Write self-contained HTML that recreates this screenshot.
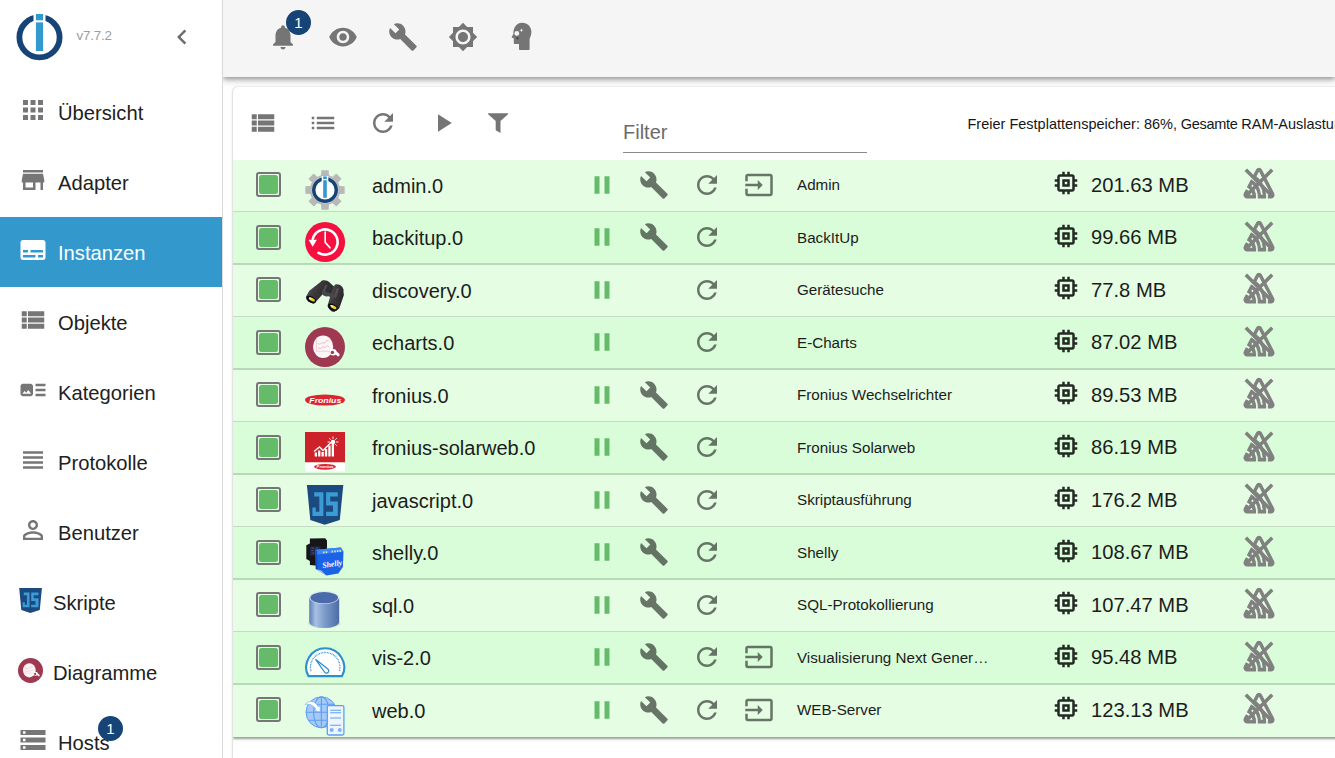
<!DOCTYPE html>
<html lang="de">
<head>
<meta charset="utf-8">
<title>instances - ioBroker</title>
<style>
*{box-sizing:border-box;margin:0;padding:0}
html,body{width:1335px;height:758px;overflow:hidden;background:#fff;font-family:"Liberation Sans",sans-serif;color:#1f1f1f}
svg{display:block;overflow:visible}
#side{z-index:3;position:absolute;left:0;top:0;width:223px;height:758px;background:#fff;border-right:1px solid #d9d9d9;overflow:hidden}
#logo{position:absolute;left:16px;top:14px;width:47px;height:47px}
#ver{position:absolute;left:76.500px;top:28px;font-size:13.400px;line-height:16px;color:#9e9e9e;letter-spacing:-.2px}
#chev{position:absolute;left:167px;top:22px;width:30px;height:30px;fill:#6e6e6e}
.nav{position:absolute;left:0;width:222px;height:70px}
.nav.sel{background:#3399cc}
.nav .ic{position:absolute;left:18px;top:18px;width:30px;height:30px;fill:#767676}
.nav.sel .ic{fill:#fff}
.nav .tx{position:absolute;left:58px;top:24px;font-size:20.200px;line-height:24px;white-space:nowrap;color:#212121}
.nav.sel .tx{color:#fff}
.badge{position:absolute;width:25px;height:25px;border-radius:50%;background:#164477;color:#fff;font-size:15px;line-height:25px;text-align:center}
#head{position:absolute;left:223px;top:0;width:1112px;height:77px;background:#f5f5f5;box-shadow:0 2px 5px rgba(0,0,0,.36),0 5px 8px rgba(0,0,0,.10)}
#head svg.hi{position:absolute;top:22px;width:30px;height:30px;fill:#757575}
#paper{position:absolute;left:233px;top:87px;width:1120px;height:700px;background:#fff;border-radius:5px 0 0 0;box-shadow:0 0 2px rgba(0,0,0,.15),-1px 0 2px rgba(0,0,0,.10)}
#paper svg.ti{position:absolute;top:21px;width:30px;height:30px;fill:#757575}
#filter{position:absolute;left:390px;top:33px;width:244px;height:33px;border-bottom:1px solid #8a8a8a;font-size:20px;line-height:24px;color:#6b6b6b}
#stat{position:absolute;left:734.500px;top:28px;font-size:14.500px;line-height:18px;white-space:nowrap;color:#161616}
#rows{position:absolute;left:0;top:73px;width:1120px;clip-path:inset(0 0 -12px 0);box-shadow:0 2px 2px rgba(0,0,0,.30),0 1px 4px rgba(0,0,0,.18)}
.row{position:relative;height:52px;border-bottom:1px solid #c3dcc3;background:#e4fde3}
.row.alt{height:53px;border-bottom:2px solid #b9d8b9;background:#d9fdd9}
.cb{position:absolute;left:23px;top:12px;width:25px;height:25px;border:2px solid #777577;border-radius:3px}
.cb i{position:absolute;left:1px;top:1px;width:19px;height:19px;background:#66bb6a;border-radius:2.500px}
.row.alt .cb{top:13px}
.row.last{border-bottom:0}
.row.alt .tt{top:17px}
.row.alt .mi{top:9px}
.row.alt .se{top:9px}
.ai{position:absolute;left:72px;top:10px;width:40px;height:40px}
.nm{position:absolute;left:139px;top:14px;font-size:20px;line-height:24px;white-space:nowrap;color:#1c1c1c}
.ri{position:absolute;top:10px;width:30px;height:30px;fill:rgba(0,0,0,.54)}
.ri.pa{left:354px;fill:#66bb6a}
.ri.wr{left:406px}
.ri.rf{left:459px}
.ri.in{left:511px}
.tt{position:absolute;left:564px;top:16px;font-size:15.200px;line-height:18px;white-space:nowrap;color:#1c1c1c}
.mi{position:absolute;left:818px;top:8px;width:30px;height:30px;fill:rgba(0,0,0,.84)}
.mt{position:absolute;left:858px;top:13px;font-size:20.200px;line-height:24px;white-space:nowrap;color:#1c1c1c}
.se{position:absolute;left:1011px;top:8px;width:30px;height:30px}
</style>
</head>
<body>
<div id="side">
<svg id="logo" viewBox="0 0 47 47"><circle cx="23.500" cy="23.300" r="20.100" fill="none" stroke="#164477" stroke-width="5.800"/><rect x="17.500" y="-1" width="12" height="9.500" fill="#fff"/><rect x="19.900" y="0" width="7.200" height="6.300" fill="#3399cc"/><rect x="19.900" y="8.400" width="7.200" height="28.600" fill="#3399cc"/></svg>
<div id="ver">v7.7.2</div>
<svg id="chev" style="" viewBox="0 0 24 24" ><path d="M15.41 7.41L14 6l-6 6 6 6 1.41-1.41L10.83 12z"/></svg>
<div class="nav" style="top:77px"><svg class="ic" style="" viewBox="0 0 24 24" ><path d="M4 8h4V4H4v4zm6 12h4v-4h-4v4zm-6 0h4v-4H4v4zm0-6h4v-4H4v4zm6 0h4v-4h-4v4zm6-10v4h4V4h-4zm-6 4h4V4h-4v4zm6 6h4v-4h-4v4zm0 6h4v-4h-4v4z"/></svg><div class="tx">Übersicht</div></div>
<div class="nav" style="top:147px"><svg class="ic" style="" viewBox="0 0 24 24" ><path d="M20 4H4v2h16V4zm1 10v-2l-1-5H4l-1 5v2h1v6h10v-6h4v6h2v-6h1zm-9 4H6v-4h6v4z"/></svg><div class="tx">Adapter</div></div>
<div class="nav sel" style="top:217px"><svg class="ic" style="" viewBox="0 0 24 24" ><path d="M20 4H4c-1.1 0-2 .9-2 2v12c0 1.1.9 2 2 2h16c1.1 0 2-.9 2-2V6c0-1.1-.9-2-2-2zM4 12h4v2H4v-2zm10 6H4v-2h10v2zm6 0h-4v-2h4v2zm0-4H10v-2h10v2z"/></svg><div class="tx">Instanzen</div></div>
<div class="nav" style="top:287px"><svg class="ic" style="" viewBox="0 0 24 24" ><path d="M3 14h4v-4H3v4zm0 5h4v-4H3v4zM3 9h4V5H3v4zm5 5h13v-4H8v4zm0 5h13v-4H8v4zM8 5v4h13V5H8z"/></svg><div class="tx">Objekte</div></div>
<div class="nav" style="top:357px"><svg class="ic" style="" viewBox="0 0 24 24" ><path d="M22 13h-8v-2h8v2zm0-6h-8v2h8V7zm-8 10h8v-2h-8v2zm-2-8v6c0 1.1-.9 2-2 2H4c-1.1 0-2-.9-2-2V9c0-1.1.9-2 2-2h6c1.1 0 2 .9 2 2zm-1.5 6l-2.25-3-1.75 2.26-1.25-1.51L3.5 15h7z"/></svg><div class="tx">Kategorien</div></div>
<div class="nav" style="top:427px"><svg class="ic" style="" viewBox="0 0 24 24" ><path d="M4 15h16v-2H4v2zm0 4h16v-2H4v2zm0-8h16V9H4v2zm0-6v2h16V5H4z"/></svg><div class="tx">Protokolle</div></div>
<div class="nav" style="top:497px"><svg class="ic" style="" viewBox="0 0 24 24" ><path d="M12 5.9c1.16 0 2.1.94 2.1 2.1s-.94 2.1-2.1 2.1S9.9 9.16 9.9 8s.94-2.1 2.1-2.1m0 9c2.97 0 6.1 1.46 6.1 2.1v1.1H5.9V17c0-.64 3.13-2.1 6.1-2.1M12 4C9.79 4 8 5.79 8 8s1.79 4 4 4 4-1.79 4-4-1.79-4-4-4zm0 9c-2.67 0-8 1.34-8 4v3h16v-3c0-2.66-5.33-4-8-4z"/></svg><div class="tx">Benutzer</div></div>
<div class="nav" style="top:567px"><svg style="position:absolute;left:18px;top:21px;width:25px;height:25px" viewBox="0 -5.100 40 40"><path d="M1.900 -5.100h36.400l-3.500 35-15.100 4.800-14.400-4.800z" fill="#1b4a80"/>
<g fill="#3a9bd5"><path d="M9.200 2.200h9.200v23.600h-11v-8.300h3.400v4.200h3.500v-15.400h-5.100z"/><path d="M21.100 2.200h11.700v4.100h-7.600v5.100h7.600v14.400h-11.700v-4.100h6.900v-6.200h-6.900z"/></g></svg><div class="tx" style="left:53px">Skripte</div></div>
<div class="nav" style="top:637px"><svg style="position:absolute;left:18px;top:21px;width:25px;height:25px" viewBox="0 0 40 40"><circle cx="20" cy="20" r="20" fill="#9f3851"/><ellipse cx="18.100" cy="19.700" rx="10.100" ry="11.300" fill="#fdf6f7"/>
<path d="M11.400 12.500v11.700h14.600" fill="none" stroke="#ecc9d3" stroke-width=".9"/>
<path d="M12.800 16.300l2 1 2.600-1.700 2.300 .700 2.300-3.300 1.700 1.300M12.800 20.900l2.600 .600 2.400-1.600 2.300 .600 2.300-1.900 1.600 1.300" fill="none" stroke="#e3b0bf" stroke-width=".8"/>
<circle cx="28.200" cy="25.200" r="3.300" fill="#fff"/><path d="M29.500 24.500l3.700 3.400" stroke="#fff" stroke-width="2.800" stroke-linecap="round" fill="none"/><path d="M33.300 26.500l1 2.600-1.500-.500z" fill="#fff"/><circle cx="27.400" cy="25.400" r="1.700" fill="#9f3851"/></svg><div class="tx" style="left:53px">Diagramme</div></div>
<div class="nav" style="top:707px"><svg class="ic" style="" viewBox="0 0 24 24" ><path d="M2 20h20v-4H2v4zm2-3h2v2H4v-2zM2 4v4h20V4H2zm4 3H4V5h2v2zm-4 7h20v-4H2v4zm2-3h2v2H4v-2z"/></svg><div class="tx">Hosts</div><div class="badge" style="left:98px;top:9px">1</div></div>
</div>
<div id="head">
<svg class="hi" style="left:45px" viewBox="0 0 24 24" ><path d="M12 22c1.1 0 2-.9 2-2h-4c0 1.1.89 2 2 2zm6-6v-5c0-3.07-1.64-5.64-4.5-6.32V4c0-.83-.67-1.5-1.5-1.5s-1.5.67-1.5 1.5v.68C7.63 5.36 6 7.92 6 11v5l-2 2v1h16v-1l-2-2z"/></svg>
<svg class="hi" style="left:105px" viewBox="0 0 24 24" ><path d="M12 4.5C7 4.5 2.73 7.61 1 12c1.73 4.39 6 7.5 11 7.5s9.27-3.11 11-7.5c-1.73-4.39-6-7.5-11-7.5zM12 17c-2.76 0-5-2.24-5-5s2.24-5 5-5 5 2.24 5 5-2.24 5-5 5zm0-8c-1.66 0-3 1.34-3 3s1.34 3 3 3 3-1.34 3-3-1.34-3-3-3z"/></svg>
<svg class="hi" style="left:165px" viewBox="0 0 24 24" ><path d="M22.7 19l-9.1-9.1c.9-2.3.4-5-1.5-6.900-2-2-5-2.400-7.400-1.300L9 6 6 9 1.600 4.700C.4 7.100.9 10.100 2.900 12.100c1.900 1.900 4.600 2.400 6.900 1.500l9.100 9.100c.4.400 1 .400 1.400 0l2.300-2.300c.5-.4.5-1.100.1-1.400z"/></svg>
<svg class="hi" style="left:225px" viewBox="0 0 24 24" ><path d="M20 8.690V4h-4.690L12 .690 8.690 4H4v4.690L.690 12 4 15.310V20h4.690L12 23.310 15.310 20H20v-4.690L23.310 12 20 8.690zM12 18c-3.310 0-6-2.690-6-6s2.690-6 6-6 6 2.690 6 6-2.690 6-6 6zm0-10c-2.210 0-4 1.790-4 4s1.790 4 4 4 4-1.790 4-4-1.790-4-4-4z"/></svg>
<svg class="hi" style="left:285px" viewBox="508 22 30 30"><path d="M522.300 22.800c5 0 9.100 3.900 9.100 9 0 2.900-1 5.100-1.800 7.200v10c0 .600-.5 1.100-1.100 1.100h-8.400c-.600 0-1.100-.500-1.100-1.100v-4.900h-4c-.700 0-1.200-.500-1.200-1.200v-4.700l-1.800-.500c-.300-.100-.4-.400-.3-.700l1.700-3.100c-.200-4.900 2.100-11.100 8.900-11.100z" fill="#757575"/><circle cx="516.800" cy="33.400" r="2.400" fill="#f5f5f5"/><path d="M521.400 28.300l.55 1.450 1.450.55-1.450.55-.55 1.450-.55-1.450-1.450-.55 1.450-.55z" fill="#f5f5f5"/><circle cx="517.500" cy="38.200" r="1" fill="#333"/></svg>
<div class="badge" style="left:63px;top:10px">1</div>
</div>
<div id="paper">
<svg class="ti" style="left:15px" viewBox="0 0 24 24" ><path d="M3 14h4v-4H3v4zm0 5h4v-4H3v4zM3 9h4V5H3v4zm5 5h13v-4H8v4zm0 5h13v-4H8v4zM8 5v4h13V5H8z"/></svg>
<svg class="ti" style="left:75px" viewBox="0 0 24 24" ><path d="M3 13h2v-2H3v2zm0 4h2v-2H3v2zm0-8h2V7H3v2zm4 4h14v-2H7v2zm0 4h14v-2H7v2zM7 7v2h14V7H7z"/></svg>
<svg class="ti" style="left:135px" viewBox="0 0 24 24" ><path d="M17.650 6.350C16.200 4.900 14.210 4 12 4c-4.420 0-7.990 3.580-7.990 8s3.570 8 7.990 8c3.730 0 6.840-2.550 7.730-6h-2.080c-.820 2.330-3.040 4-5.650 4-3.310 0-6-2.690-6-6s2.690-6 6-6c1.660 0 3.140.690 4.220 1.780L13 11h7V4l-2.350 2.350z"/></svg>
<svg class="ti" style="left:195px" viewBox="0 0 24 24" ><path d="M8 5v14l11-7z"/></svg>
<svg class="ti" style="left:248px;top:21px" viewBox="481 108 30 30"><path d="M488.100 113.200h20v1l-7.600 6.900v11.800l-4.800-2.700v-9.100l-7.600-6.900z"/></svg>
<div id="filter">Filter</div>
<div id="stat">Freier Festplattenspeicher: 86%,<span style="letter-spacing:-.300px"> Gesamte </span>RAM-Auslastung: 63%, Insgesamt 14 Prozesse</div>
<div id="rows">
<div class="row"><div class="cb"><i></i></div><svg class="ai" viewBox="0 0 40 40"><path d="M16.04 5.53 L16.33 0.34 L23.67 0.34 L23.96 5.53 L27.43 6.97 L31.31 3.50 L36.50 8.69 L33.03 12.57 L34.47 16.04 L39.66 16.33 L39.66 23.67 L34.47 23.96 L33.03 27.43 L36.50 31.31 L31.31 36.50 L27.43 33.03 L23.96 34.47 L23.67 39.66 L16.33 39.66 L16.04 34.47 L12.57 33.03 L8.69 36.50 L3.50 31.31 L6.97 27.43 L5.53 23.96 L0.34 23.67 L0.34 16.33 L5.53 16.04 L6.97 12.57 L3.50 8.69 L8.69 3.50 L12.57 6.97Z" fill="#b8b8b8"/><circle cx="20" cy="20" r="15" fill="#b8b8b8"/><circle cx="20" cy="20" r="13.2" fill="#fff"/>
<circle cx="20" cy="20" r="11.3" fill="none" stroke="#164477" stroke-width="3.4"/><rect x="16.7" y="6" width="6.6" height="5" fill="#fff"/>
<rect x="18.2" y="6.4" width="3.6" height="2.8" fill="#3399cc"/><rect x="18.2" y="10.2" width="3.6" height="17.6" fill="#3399cc"/></svg><div class="nm">admin.0</div><svg class="ri pa" style="" viewBox="0 0 24 24" ><path d="M6 19h4V5H6v14zm8-14v14h4V5h-4z"/></svg><svg class="ri wr" style="" viewBox="0 0 24 24" ><path d="M22.7 19l-9.1-9.1c.9-2.3.4-5-1.5-6.900-2-2-5-2.400-7.400-1.300L9 6 6 9 1.600 4.700C.4 7.100.9 10.100 2.900 12.100c1.900 1.900 4.600 2.400 6.900 1.500l9.100 9.100c.4.400 1 .400 1.400 0l2.300-2.300c.5-.4.5-1.100.1-1.400z"/></svg><svg class="ri rf" style="" viewBox="0 0 24 24" ><path d="M17.650 6.350C16.200 4.900 14.210 4 12 4c-4.420 0-7.990 3.580-7.990 8s3.570 8 7.990 8c3.730 0 6.840-2.550 7.730-6h-2.080c-.820 2.330-3.040 4-5.650 4-3.310 0-6-2.690-6-6s2.690-6 6-6c1.660 0 3.140.690 4.220 1.780L13 11h7V4l-2.350 2.350z"/></svg><svg class="ri in" style="" viewBox="0 0 24 24" ><path d="M21 3.010H3c-1.100 0-2 .900-2 2V9h2V4.990h18v14.030H3V15H1v4.010c0 1.100.900 1.980 2 1.980h18c1.100 0 2-.880 2-1.980v-14c0-1.110-.900-2-2-2zM11 16l4-4-4-4v3H1v2h10v3z"/></svg><div class="tt">Admin</div><svg class="mi" style="" viewBox="0 0 24 24" ><path d="M15 9H9v6h6V9zm-2 4h-2v-2h2v2zm8-2V9h-2V7c0-1.100-.900-2-2-2h-2V3h-2v2h-2V3H9v2H7c-1.100 0-2 .900-2 2v2H3v2h2v2H3v2h2v2c0 1.100.900 2 2 2h2v2h2v-2h2v2h2v-2h2c1.100 0 2-.900 2-2v-2h2v-2h-2v-2h2zm-4 6H7V7h10v10z"/></svg><div class="mt">201.63 MB</div><svg class="se" viewBox="0 0 30 30"><g transform="translate(0,-1.700) scale(1.250,1.400)"><path d="M13.91 2.505c-.873-1.448-2.972-1.448-3.844 0L6.904 7.920a15.478 15.478 0 0 1 8.530 12.811h-2.221A13.301 13.301 0 0 0 5.784 9.814l-2.926 5.060a7.650 7.650 0 0 1 4.435 5.848H2.194a.365.365 0 0 1-.298-.534l1.413-2.402a5.160 5.160 0 0 0-1.614-.913L.296 19.275a2.182 2.182 0 0 0 .812 2.999 2.240 2.240 0 0 0 1.086.288h6.983a9.322 9.322 0 0 0-3.845-8.318l1.110-1.922a11.470 11.470 0 0 1 4.950 10.240h5.915a17.242 17.242 0 0 0-7.885-15.280l2.244-3.845a.370.370 0 0 1 .504-.130c.255.140 9.750 16.708 9.928 16.900a.365.365 0 0 1-.327.543h-2.287c.029.612.029 1.223 0 1.831h2.297a2.206 2.206 0 0 0 1.922-3.310z" fill="#808080" stroke="#808080" stroke-width=".8" stroke-linejoin="round"/></g><path d="M1.800 1.800l26.500 26.500M28.200 1.800l-26.500 26.500" stroke="#808080" stroke-width="3.500" fill="none"/></svg></div>
<div class="row alt"><div class="cb"><i></i></div><svg class="ai" viewBox="0 0 40 40"><circle cx="20.100" cy="20.100" r="20" fill="#f5103f"/>
<path d="M7.830 16.740A12.600 12.600 0 1 1 13.500 30.800" fill="none" stroke="#fff" stroke-width="2.600" stroke-linecap="round"/>
<path d="M3.500 17.800h8.400l-4.200 6.900z" fill="#fff"/>
<path d="M20.200 10v10.400l4.800 5.400" fill="none" stroke="#fff" stroke-width="1.600" stroke-linecap="round" stroke-linejoin="round"/></svg><div class="nm">backitup.0</div><svg class="ri pa" style="" viewBox="0 0 24 24" ><path d="M6 19h4V5H6v14zm8-14v14h4V5h-4z"/></svg><svg class="ri wr" style="" viewBox="0 0 24 24" ><path d="M22.7 19l-9.1-9.1c.9-2.3.4-5-1.5-6.900-2-2-5-2.400-7.400-1.300L9 6 6 9 1.600 4.700C.4 7.100.9 10.100 2.900 12.100c1.900 1.900 4.600 2.400 6.900 1.500l9.100 9.100c.4.400 1 .400 1.400 0l2.300-2.300c.5-.4.5-1.100.1-1.400z"/></svg><svg class="ri rf" style="" viewBox="0 0 24 24" ><path d="M17.650 6.350C16.200 4.900 14.210 4 12 4c-4.420 0-7.990 3.580-7.990 8s3.570 8 7.990 8c3.730 0 6.840-2.550 7.730-6h-2.080c-.820 2.330-3.040 4-5.650 4-3.310 0-6-2.690-6-6s2.690-6 6-6c1.660 0 3.140.690 4.220 1.780L13 11h7V4l-2.350 2.350z"/></svg><div class="tt">BackItUp</div><svg class="mi" style="" viewBox="0 0 24 24" ><path d="M15 9H9v6h6V9zm-2 4h-2v-2h2v2zm8-2V9h-2V7c0-1.100-.900-2-2-2h-2V3h-2v2h-2V3H9v2H7c-1.100 0-2 .900-2 2v2H3v2h2v2H3v2h2v2c0 1.100.900 2 2 2h2v2h2v-2h2v2h2v-2h2c1.100 0 2-.900 2-2v-2h2v-2h-2v-2h2zm-4 6H7V7h10v10z"/></svg><div class="mt">99.66 MB</div><svg class="se" viewBox="0 0 30 30"><g transform="translate(0,-1.700) scale(1.250,1.400)"><path d="M13.91 2.505c-.873-1.448-2.972-1.448-3.844 0L6.904 7.920a15.478 15.478 0 0 1 8.530 12.811h-2.221A13.301 13.301 0 0 0 5.784 9.814l-2.926 5.060a7.650 7.650 0 0 1 4.435 5.848H2.194a.365.365 0 0 1-.298-.534l1.413-2.402a5.160 5.160 0 0 0-1.614-.913L.296 19.275a2.182 2.182 0 0 0 .812 2.999 2.240 2.240 0 0 0 1.086.288h6.983a9.322 9.322 0 0 0-3.845-8.318l1.110-1.922a11.470 11.470 0 0 1 4.950 10.240h5.915a17.242 17.242 0 0 0-7.885-15.280l2.244-3.845a.370.370 0 0 1 .504-.130c.255.140 9.750 16.708 9.928 16.900a.365.365 0 0 1-.327.543h-2.287c.029.612.029 1.223 0 1.831h2.297a2.206 2.206 0 0 0 1.922-3.310z" fill="#808080" stroke="#808080" stroke-width=".8" stroke-linejoin="round"/></g><path d="M1.800 1.800l26.500 26.500M28.200 1.800l-26.500 26.500" stroke="#808080" stroke-width="3.500" fill="none"/></svg></div>
<div class="row"><div class="cb"><i></i></div><svg class="ai" viewBox="0 0 40 40"><defs><linearGradient id="bn1" x1="0" y1="0" x2="1" y2=".6"><stop offset="0" stop-color="#6a676d"/><stop offset=".45" stop-color="#3f3b3e"/><stop offset="1" stop-color="#262426"/></linearGradient></defs>
<path d="M17.500 6.500l6.500 .500 5 4.500 4-1 5.500 3.500-1 8-9.500 .500-5.500-3-6-2.500z" fill="#303033"/>
<path d="M15.800 6.800c1.200-2.300 6.800-1.800 8.600 .600l-4 8.600-7.400 8.500-4 4.200c-3-.300-7.500-3.500-8.200-6.800l3.500-6.200z" fill="url(#bn1)"/>
<path d="M29.300 10.500c1.500-2.600 7.500-.500 8.600 2.500l1 7-4.700 13.600-5 3.500c-3 -.300-6.300-3.500-6.600-6.600l2.700-9.500z" fill="url(#bn1)"/>
<path d="M20.500 9.500l2.200 .700-3.800 8.500-2.200-.800zM31.800 13l2.200 .800-3 9-2.200-.800z" fill="#6a686e" opacity=".55"/>
<path d="M18 17.500c1.500-1.500 4-1.200 5 .300l3.500 .600c1-.800 2.500-.300 3.200 1l-1.700 5.600-4-3.800-3 .300-3.500-1.500z" fill="#47464b"/>
<ellipse cx="6.200" cy="24.500" rx="5.300" ry="3.100" transform="rotate(27 6.200 24.500)" fill="#0d0d10"/><ellipse cx="6.900" cy="24.400" rx="3.300" ry="1.500" transform="rotate(27 6.900 24.400)" fill="#f0cf1d"/><ellipse cx="5.200" cy="23.400" rx="1.600" ry=".700" transform="rotate(27 5.200 23.400)" fill="#fdf8d8"/>
<ellipse cx="27.800" cy="32.200" rx="5.300" ry="3.100" transform="rotate(27 27.800 32.200)" fill="#0d0d10"/><ellipse cx="28.500" cy="32.100" rx="3.300" ry="1.500" transform="rotate(27 28.500 32.100)" fill="#f0cf1d"/><ellipse cx="26.800" cy="31.100" rx="1.600" ry=".700" transform="rotate(27 26.800 31.100)" fill="#fdf8d8"/></svg><div class="nm">discovery.0</div><svg class="ri pa" style="" viewBox="0 0 24 24" ><path d="M6 19h4V5H6v14zm8-14v14h4V5h-4z"/></svg><svg class="ri rf" style="" viewBox="0 0 24 24" ><path d="M17.650 6.350C16.200 4.900 14.210 4 12 4c-4.420 0-7.990 3.580-7.990 8s3.570 8 7.990 8c3.730 0 6.840-2.550 7.730-6h-2.080c-.820 2.330-3.040 4-5.650 4-3.310 0-6-2.690-6-6s2.690-6 6-6c1.660 0 3.140.690 4.220 1.780L13 11h7V4l-2.350 2.350z"/></svg><div class="tt">Gerätesuche</div><svg class="mi" style="" viewBox="0 0 24 24" ><path d="M15 9H9v6h6V9zm-2 4h-2v-2h2v2zm8-2V9h-2V7c0-1.100-.900-2-2-2h-2V3h-2v2h-2V3H9v2H7c-1.100 0-2 .900-2 2v2H3v2h2v2H3v2h2v2c0 1.100.900 2 2 2h2v2h2v-2h2v2h2v-2h2c1.100 0 2-.900 2-2v-2h2v-2h-2v-2h2zm-4 6H7V7h10v10z"/></svg><div class="mt">77.8 MB</div><svg class="se" viewBox="0 0 30 30"><g transform="translate(0,-1.700) scale(1.250,1.400)"><path d="M13.91 2.505c-.873-1.448-2.972-1.448-3.844 0L6.904 7.920a15.478 15.478 0 0 1 8.530 12.811h-2.221A13.301 13.301 0 0 0 5.784 9.814l-2.926 5.060a7.650 7.650 0 0 1 4.435 5.848H2.194a.365.365 0 0 1-.298-.534l1.413-2.402a5.160 5.160 0 0 0-1.614-.913L.296 19.275a2.182 2.182 0 0 0 .812 2.999 2.240 2.240 0 0 0 1.086.288h6.983a9.322 9.322 0 0 0-3.845-8.318l1.110-1.922a11.470 11.470 0 0 1 4.950 10.240h5.915a17.242 17.242 0 0 0-7.885-15.280l2.244-3.845a.370.370 0 0 1 .504-.130c.255.140 9.750 16.708 9.928 16.900a.365.365 0 0 1-.327.543h-2.287c.029.612.029 1.223 0 1.831h2.297a2.206 2.206 0 0 0 1.922-3.310z" fill="#808080" stroke="#808080" stroke-width=".8" stroke-linejoin="round"/></g><path d="M1.800 1.800l26.500 26.500M28.200 1.800l-26.500 26.500" stroke="#808080" stroke-width="3.500" fill="none"/></svg></div>
<div class="row alt"><div class="cb"><i></i></div><svg class="ai" viewBox="0 0 40 40"><circle cx="20" cy="20" r="20" fill="#9f3851"/><ellipse cx="18.100" cy="19.700" rx="10.100" ry="11.300" fill="#fdf6f7"/>
<path d="M11.400 12.500v11.700h14.600" fill="none" stroke="#ecc9d3" stroke-width=".9"/>
<path d="M12.800 16.300l2 1 2.600-1.700 2.300 .700 2.300-3.300 1.700 1.300M12.800 20.900l2.600 .600 2.400-1.600 2.300 .600 2.300-1.900 1.600 1.300" fill="none" stroke="#e3b0bf" stroke-width=".8"/>
<circle cx="28.200" cy="25.200" r="3.300" fill="#fff"/><path d="M29.500 24.500l3.700 3.400" stroke="#fff" stroke-width="2.800" stroke-linecap="round" fill="none"/><path d="M33.300 26.500l1 2.600-1.500-.500z" fill="#fff"/><circle cx="27.400" cy="25.400" r="1.700" fill="#9f3851"/></svg><div class="nm">echarts.0</div><svg class="ri pa" style="" viewBox="0 0 24 24" ><path d="M6 19h4V5H6v14zm8-14v14h4V5h-4z"/></svg><svg class="ri rf" style="" viewBox="0 0 24 24" ><path d="M17.650 6.350C16.200 4.900 14.210 4 12 4c-4.420 0-7.990 3.580-7.990 8s3.570 8 7.990 8c3.730 0 6.840-2.550 7.730-6h-2.080c-.820 2.330-3.040 4-5.650 4-3.310 0-6-2.690-6-6s2.690-6 6-6c1.660 0 3.140.690 4.220 1.780L13 11h7V4l-2.350 2.350z"/></svg><div class="tt">E-Charts</div><svg class="mi" style="" viewBox="0 0 24 24" ><path d="M15 9H9v6h6V9zm-2 4h-2v-2h2v2zm8-2V9h-2V7c0-1.100-.900-2-2-2h-2V3h-2v2h-2V3H9v2H7c-1.100 0-2 .900-2 2v2H3v2h2v2H3v2h2v2c0 1.100.900 2 2 2h2v2h2v-2h2v2h2v-2h2c1.100 0 2-.900 2-2v-2h2v-2h-2v-2h2zm-4 6H7V7h10v10z"/></svg><div class="mt">87.02 MB</div><svg class="se" viewBox="0 0 30 30"><g transform="translate(0,-1.700) scale(1.250,1.400)"><path d="M13.91 2.505c-.873-1.448-2.972-1.448-3.844 0L6.904 7.920a15.478 15.478 0 0 1 8.530 12.811h-2.221A13.301 13.301 0 0 0 5.784 9.814l-2.926 5.060a7.650 7.650 0 0 1 4.435 5.848H2.194a.365.365 0 0 1-.298-.534l1.413-2.402a5.160 5.160 0 0 0-1.614-.913L.296 19.275a2.182 2.182 0 0 0 .812 2.999 2.240 2.240 0 0 0 1.086.288h6.983a9.322 9.322 0 0 0-3.845-8.318l1.110-1.922a11.470 11.470 0 0 1 4.950 10.240h5.915a17.242 17.242 0 0 0-7.885-15.280l2.244-3.845a.370.370 0 0 1 .504-.130c.255.140 9.750 16.708 9.928 16.900a.365.365 0 0 1-.327.543h-2.287c.029.612.029 1.223 0 1.831h2.297a2.206 2.206 0 0 0 1.922-3.310z" fill="#808080" stroke="#808080" stroke-width=".8" stroke-linejoin="round"/></g><path d="M1.800 1.800l26.500 26.500M28.200 1.800l-26.500 26.500" stroke="#808080" stroke-width="3.500" fill="none"/></svg></div>
<div class="row"><div class="cb"><i></i></div><svg class="ai" viewBox="0 0 40 40"><ellipse cx="20" cy="20" rx="20" ry="5.600" fill="#db2531"/>
<text x="20.300" y="22.600" text-anchor="middle" font-family="Liberation Sans, sans-serif" font-size="7.800" font-weight="700" font-style="italic" fill="#fff" textLength="32" lengthAdjust="spacingAndGlyphs">Fronius</text></svg><div class="nm">fronius.0</div><svg class="ri pa" style="" viewBox="0 0 24 24" ><path d="M6 19h4V5H6v14zm8-14v14h4V5h-4z"/></svg><svg class="ri wr" style="" viewBox="0 0 24 24" ><path d="M22.7 19l-9.1-9.1c.9-2.3.4-5-1.5-6.900-2-2-5-2.400-7.400-1.300L9 6 6 9 1.600 4.700C.4 7.100.9 10.100 2.900 12.100c1.900 1.900 4.600 2.400 6.900 1.500l9.100 9.100c.4.400 1 .400 1.400 0l2.300-2.300c.5-.4.5-1.100.1-1.400z"/></svg><svg class="ri rf" style="" viewBox="0 0 24 24" ><path d="M17.650 6.350C16.200 4.900 14.210 4 12 4c-4.420 0-7.990 3.580-7.990 8s3.570 8 7.990 8c3.730 0 6.840-2.550 7.730-6h-2.080c-.820 2.330-3.040 4-5.650 4-3.310 0-6-2.690-6-6s2.690-6 6-6c1.660 0 3.140.690 4.220 1.780L13 11h7V4l-2.350 2.350z"/></svg><div class="tt">Fronius Wechselrichter</div><svg class="mi" style="" viewBox="0 0 24 24" ><path d="M15 9H9v6h6V9zm-2 4h-2v-2h2v2zm8-2V9h-2V7c0-1.100-.900-2-2-2h-2V3h-2v2h-2V3H9v2H7c-1.100 0-2 .900-2 2v2H3v2h2v2H3v2h2v2c0 1.100.900 2 2 2h2v2h2v-2h2v2h2v-2h2c1.100 0 2-.900 2-2v-2h2v-2h-2v-2h2zm-4 6H7V7h10v10z"/></svg><div class="mt">89.53 MB</div><svg class="se" viewBox="0 0 30 30"><g transform="translate(0,-1.700) scale(1.250,1.400)"><path d="M13.91 2.505c-.873-1.448-2.972-1.448-3.844 0L6.904 7.920a15.478 15.478 0 0 1 8.530 12.811h-2.221A13.301 13.301 0 0 0 5.784 9.814l-2.926 5.060a7.650 7.650 0 0 1 4.435 5.848H2.194a.365.365 0 0 1-.298-.534l1.413-2.402a5.160 5.160 0 0 0-1.614-.913L.296 19.275a2.182 2.182 0 0 0 .812 2.999 2.240 2.240 0 0 0 1.086.288h6.983a9.322 9.322 0 0 0-3.845-8.318l1.110-1.922a11.470 11.470 0 0 1 4.950 10.240h5.915a17.242 17.242 0 0 0-7.885-15.280l2.244-3.845a.370.370 0 0 1 .504-.130c.255.140 9.750 16.708 9.928 16.900a.365.365 0 0 1-.327.543h-2.287c.029.612.029 1.223 0 1.831h2.297a2.206 2.206 0 0 0 1.922-3.310z" fill="#808080" stroke="#808080" stroke-width=".8" stroke-linejoin="round"/></g><path d="M1.800 1.800l26.500 26.500M28.200 1.800l-26.500 26.500" stroke="#808080" stroke-width="3.500" fill="none"/></svg></div>
<div class="row alt"><div class="cb"><i></i></div><svg class="ai" viewBox="0 0 40 40"><rect x="0" y="0" width="40" height="30.500" fill="#cd2229"/><rect x="0" y="30.500" width="40" height="9" fill="#fff"/>
<g transform="translate(0,-2)"><g fill="#fff"><rect x="9.700" y="22.500" width="2.300" height="4"/><rect x="13.100" y="20.500" width="2.300" height="6"/><rect x="16.500" y="22" width="2.300" height="4.500"/><rect x="19.900" y="19" width="2.300" height="7.500"/><rect x="23.300" y="15.500" width="2.300" height="11"/><rect x="26.700" y="14" width="2.300" height="12.500"/>
<path d="M9 21.500l5.500-4.500 3.500 3.500 8-8" fill="none" stroke="#fff" stroke-width="1.300"/><circle cx="28" cy="12" r="2.300"/>
<path d="M28 6.500v2.500M28 15v2.500M22.500 12h2.500M31 12h2.500M24.100 8.100l1.800 1.800M30.100 14.100l1.800 1.800M31.900 8.100l-1.800 1.800" stroke="#fff" stroke-width=".9" fill="none"/></g>
<ellipse cx="20" cy="36.800" rx="11" ry="2.900" fill="#db2531"/>
<text x="20.100" y="38.300" text-anchor="middle" font-family="Liberation Sans, sans-serif" font-size="4.300" font-weight="700" font-style="italic" fill="#fff" textLength="17" lengthAdjust="spacingAndGlyphs">Fronius</text></g></svg><div class="nm">fronius-solarweb.0</div><svg class="ri pa" style="" viewBox="0 0 24 24" ><path d="M6 19h4V5H6v14zm8-14v14h4V5h-4z"/></svg><svg class="ri wr" style="" viewBox="0 0 24 24" ><path d="M22.7 19l-9.1-9.1c.9-2.3.4-5-1.5-6.900-2-2-5-2.400-7.400-1.300L9 6 6 9 1.600 4.700C.4 7.100.9 10.100 2.900 12.100c1.900 1.900 4.600 2.400 6.900 1.500l9.100 9.100c.4.400 1 .400 1.400 0l2.300-2.300c.5-.4.5-1.100.1-1.400z"/></svg><svg class="ri rf" style="" viewBox="0 0 24 24" ><path d="M17.650 6.350C16.200 4.900 14.210 4 12 4c-4.420 0-7.990 3.580-7.990 8s3.570 8 7.990 8c3.730 0 6.840-2.550 7.730-6h-2.080c-.820 2.330-3.040 4-5.650 4-3.310 0-6-2.690-6-6s2.690-6 6-6c1.660 0 3.140.690 4.220 1.780L13 11h7V4l-2.350 2.350z"/></svg><div class="tt">Fronius Solarweb</div><svg class="mi" style="" viewBox="0 0 24 24" ><path d="M15 9H9v6h6V9zm-2 4h-2v-2h2v2zm8-2V9h-2V7c0-1.100-.900-2-2-2h-2V3h-2v2h-2V3H9v2H7c-1.100 0-2 .900-2 2v2H3v2h2v2H3v2h2v2c0 1.100.900 2 2 2h2v2h2v-2h2v2h2v-2h2c1.100 0 2-.900 2-2v-2h2v-2h-2v-2h2zm-4 6H7V7h10v10z"/></svg><div class="mt">86.19 MB</div><svg class="se" viewBox="0 0 30 30"><g transform="translate(0,-1.700) scale(1.250,1.400)"><path d="M13.91 2.505c-.873-1.448-2.972-1.448-3.844 0L6.904 7.920a15.478 15.478 0 0 1 8.530 12.811h-2.221A13.301 13.301 0 0 0 5.784 9.814l-2.926 5.060a7.650 7.650 0 0 1 4.435 5.848H2.194a.365.365 0 0 1-.298-.534l1.413-2.402a5.160 5.160 0 0 0-1.614-.913L.296 19.275a2.182 2.182 0 0 0 .812 2.999 2.240 2.240 0 0 0 1.086.288h6.983a9.322 9.322 0 0 0-3.845-8.318l1.110-1.922a11.470 11.470 0 0 1 4.950 10.240h5.915a17.242 17.242 0 0 0-7.885-15.280l2.244-3.845a.370.370 0 0 1 .504-.130c.255.140 9.750 16.708 9.928 16.900a.365.365 0 0 1-.327.543h-2.287c.029.612.029 1.223 0 1.831h2.297a2.206 2.206 0 0 0 1.922-3.310z" fill="#808080" stroke="#808080" stroke-width=".8" stroke-linejoin="round"/></g><path d="M1.800 1.800l26.500 26.500M28.200 1.800l-26.500 26.500" stroke="#808080" stroke-width="3.500" fill="none"/></svg></div>
<div class="row"><div class="cb"><i></i></div><svg class="ai" viewBox="0 -5.100 40 40"><g transform="translate(0,0)"><path d="M1.900 -5.100h36.400l-3.500 35-15.100 4.800-14.400-4.800z" fill="#1b4a80"/>
<g fill="#3a9bd5"><path d="M9.200 2.200h9.200v23.600h-11v-8.300h3.400v4.200h3.500v-15.400h-5.100z"/><path d="M21.100 2.200h11.700v4.100h-7.600v5.100h7.600v14.400h-11.700v-4.100h6.900v-6.200h-6.900z"/></g></g></svg><div class="nm">javascript.0</div><svg class="ri pa" style="" viewBox="0 0 24 24" ><path d="M6 19h4V5H6v14zm8-14v14h4V5h-4z"/></svg><svg class="ri wr" style="" viewBox="0 0 24 24" ><path d="M22.7 19l-9.1-9.1c.9-2.3.4-5-1.5-6.900-2-2-5-2.400-7.400-1.300L9 6 6 9 1.600 4.700C.4 7.100.9 10.100 2.900 12.100c1.900 1.900 4.600 2.400 6.900 1.500l9.100 9.100c.4.400 1 .400 1.400 0l2.300-2.300c.5-.4.5-1.100.1-1.400z"/></svg><svg class="ri rf" style="" viewBox="0 0 24 24" ><path d="M17.650 6.350C16.200 4.900 14.210 4 12 4c-4.420 0-7.990 3.580-7.990 8s3.570 8 7.990 8c3.730 0 6.840-2.550 7.730-6h-2.080c-.820 2.330-3.040 4-5.650 4-3.310 0-6-2.690-6-6s2.690-6 6-6c1.660 0 3.140.690 4.220 1.780L13 11h7V4l-2.350 2.350z"/></svg><div class="tt">Skriptausführung</div><svg class="mi" style="" viewBox="0 0 24 24" ><path d="M15 9H9v6h6V9zm-2 4h-2v-2h2v2zm8-2V9h-2V7c0-1.100-.900-2-2-2h-2V3h-2v2h-2V3H9v2H7c-1.100 0-2 .900-2 2v2H3v2h2v2H3v2h2v2c0 1.100.900 2 2 2h2v2h2v-2h2v2h2v-2h2c1.100 0 2-.900 2-2v-2h2v-2h-2v-2h2zm-4 6H7V7h10v10z"/></svg><div class="mt">176.2 MB</div><svg class="se" viewBox="0 0 30 30"><g transform="translate(0,-1.700) scale(1.250,1.400)"><path d="M13.91 2.505c-.873-1.448-2.972-1.448-3.844 0L6.904 7.920a15.478 15.478 0 0 1 8.530 12.811h-2.221A13.301 13.301 0 0 0 5.784 9.814l-2.926 5.060a7.650 7.650 0 0 1 4.435 5.848H2.194a.365.365 0 0 1-.298-.534l1.413-2.402a5.160 5.160 0 0 0-1.614-.913L.296 19.275a2.182 2.182 0 0 0 .812 2.999 2.240 2.240 0 0 0 1.086.288h6.983a9.322 9.322 0 0 0-3.845-8.318l1.110-1.922a11.470 11.470 0 0 1 4.950 10.240h5.915a17.242 17.242 0 0 0-7.885-15.280l2.244-3.845a.370.370 0 0 1 .504-.130c.255.140 9.750 16.708 9.928 16.900a.365.365 0 0 1-.327.543h-2.287c.029.612.029 1.223 0 1.831h2.297a2.206 2.206 0 0 0 1.922-3.310z" fill="#808080" stroke="#808080" stroke-width=".8" stroke-linejoin="round"/></g><path d="M1.800 1.800l26.500 26.500M28.200 1.800l-26.500 26.500" stroke="#808080" stroke-width="3.500" fill="none"/></svg></div>
<div class="row alt"><div class="cb"><i></i></div><svg class="ai" viewBox="0 0 40 40"><path d="M4.900 1.600l15.200-.300 1.900 2.300v24l-11.800 1-5.300-.600v-4l-3.600-2v-13.800l3.600-1.700z" fill="#161618"/><path d="M4.900 9.500h10.500v9.200h-10.500z" fill="#1d2a47"/><path d="M6.500 11h2.500M10.500 11h3M6.500 13.500h2M6.500 16h3" stroke="#6d4a78" stroke-width=".8" fill="none"/>
<path d="M10.200 12.800l25.700-2.300 2.600 4.300-.600 15.200-4.600 6.600-11.900 1.900-10.600-6.600z" fill="#1b63e6"/>
<path d="M10.200 12.800l25.700-2.300 2.600 4.300-27.700 2.900z" fill="#3688f7"/>
<path d="M10.200 12.800l1.800 1 .800 19.500-2-1.400z" fill="#1450c5"/><path d="M10.800 31.900l5.500 1.500 5.100 5.100z" fill="#a8c4f5"/>
<g fill="#e9dfb5"><rect x="18" y="14.500" width="1.500" height="1.900"/><rect x="20.700" y="14.200" width="1.500" height="1.900"/><rect x="26.600" y="13.600" width="1.500" height="1.900"/><rect x="29.300" y="13.400" width="1.500" height="1.900"/><rect x="31.900" y="13.100" width="1.500" height="1.900"/><rect x="34.500" y="12.900" width="1.500" height="1.900"/></g>
<text x="27.200" y="29.600" text-anchor="middle" transform="rotate(-9 27.200 26.700)" font-family="Liberation Serif, serif" font-size="7.800" font-weight="700" font-style="italic" fill="#fff" textLength="20" lengthAdjust="spacingAndGlyphs">Shelly</text></svg><div class="nm">shelly.0</div><svg class="ri pa" style="" viewBox="0 0 24 24" ><path d="M6 19h4V5H6v14zm8-14v14h4V5h-4z"/></svg><svg class="ri wr" style="" viewBox="0 0 24 24" ><path d="M22.7 19l-9.1-9.1c.9-2.3.4-5-1.5-6.900-2-2-5-2.400-7.400-1.300L9 6 6 9 1.600 4.700C.4 7.100.9 10.100 2.900 12.100c1.900 1.900 4.600 2.400 6.900 1.500l9.100 9.100c.4.400 1 .400 1.400 0l2.300-2.300c.5-.4.5-1.100.1-1.400z"/></svg><svg class="ri rf" style="" viewBox="0 0 24 24" ><path d="M17.650 6.350C16.200 4.900 14.210 4 12 4c-4.420 0-7.990 3.580-7.990 8s3.570 8 7.990 8c3.730 0 6.840-2.550 7.730-6h-2.080c-.820 2.330-3.040 4-5.650 4-3.310 0-6-2.690-6-6s2.690-6 6-6c1.660 0 3.140.690 4.220 1.780L13 11h7V4l-2.350 2.350z"/></svg><div class="tt">Shelly</div><svg class="mi" style="" viewBox="0 0 24 24" ><path d="M15 9H9v6h6V9zm-2 4h-2v-2h2v2zm8-2V9h-2V7c0-1.100-.900-2-2-2h-2V3h-2v2h-2V3H9v2H7c-1.100 0-2 .900-2 2v2H3v2h2v2H3v2h2v2c0 1.100.900 2 2 2h2v2h2v-2h2v2h2v-2h2c1.100 0 2-.900 2-2v-2h2v-2h-2v-2h2zm-4 6H7V7h10v10z"/></svg><div class="mt">108.67 MB</div><svg class="se" viewBox="0 0 30 30"><g transform="translate(0,-1.700) scale(1.250,1.400)"><path d="M13.91 2.505c-.873-1.448-2.972-1.448-3.844 0L6.904 7.920a15.478 15.478 0 0 1 8.530 12.811h-2.221A13.301 13.301 0 0 0 5.784 9.814l-2.926 5.060a7.650 7.650 0 0 1 4.435 5.848H2.194a.365.365 0 0 1-.298-.534l1.413-2.402a5.160 5.160 0 0 0-1.614-.913L.296 19.275a2.182 2.182 0 0 0 .812 2.999 2.240 2.240 0 0 0 1.086.288h6.983a9.322 9.322 0 0 0-3.845-8.318l1.110-1.922a11.470 11.470 0 0 1 4.950 10.240h5.915a17.242 17.242 0 0 0-7.885-15.280l2.244-3.845a.370.370 0 0 1 .504-.130c.255.140 9.750 16.708 9.928 16.900a.365.365 0 0 1-.327.543h-2.287c.029.612.029 1.223 0 1.831h2.297a2.206 2.206 0 0 0 1.922-3.310z" fill="#808080" stroke="#808080" stroke-width=".8" stroke-linejoin="round"/></g><path d="M1.800 1.800l26.500 26.500M28.200 1.800l-26.500 26.500" stroke="#808080" stroke-width="3.500" fill="none"/></svg></div>
<div class="row"><div class="cb"><i></i></div><svg class="ai" viewBox="0 0 40 40"><defs><linearGradient id="cyl" x1="0" x2="1" y1="0" y2="0"><stop offset="0" stop-color="#5d80b8"/><stop offset=".22" stop-color="#a9c0e2"/><stop offset=".5" stop-color="#7f9dcc"/><stop offset="1" stop-color="#4b6ca6"/></linearGradient></defs>
<ellipse cx="19.300" cy="33.800" rx="16.500" ry="4.200" fill="#000" opacity=".08"/>
<path d="M4.200 7.300v24.500a15 6.300 0 0 0 30 0v-24.500z" fill="url(#cyl)"/>
<ellipse cx="19.200" cy="7.300" rx="15" ry="6.500" fill="#dfe8f6"/><ellipse cx="19.200" cy="7.700" rx="13.800" ry="5.600" fill="#4a6aa9"/></svg><div class="nm">sql.0</div><svg class="ri pa" style="" viewBox="0 0 24 24" ><path d="M6 19h4V5H6v14zm8-14v14h4V5h-4z"/></svg><svg class="ri wr" style="" viewBox="0 0 24 24" ><path d="M22.7 19l-9.1-9.1c.9-2.3.4-5-1.5-6.900-2-2-5-2.400-7.400-1.300L9 6 6 9 1.600 4.700C.4 7.100.9 10.100 2.900 12.100c1.900 1.900 4.600 2.400 6.900 1.500l9.100 9.100c.4.400 1 .400 1.400 0l2.300-2.300c.5-.4.5-1.100.1-1.400z"/></svg><svg class="ri rf" style="" viewBox="0 0 24 24" ><path d="M17.650 6.350C16.200 4.900 14.210 4 12 4c-4.420 0-7.990 3.580-7.990 8s3.570 8 7.990 8c3.730 0 6.840-2.550 7.730-6h-2.080c-.820 2.330-3.040 4-5.650 4-3.310 0-6-2.690-6-6s2.690-6 6-6c1.660 0 3.140.690 4.220 1.780L13 11h7V4l-2.350 2.350z"/></svg><div class="tt">SQL-Protokollierung</div><svg class="mi" style="" viewBox="0 0 24 24" ><path d="M15 9H9v6h6V9zm-2 4h-2v-2h2v2zm8-2V9h-2V7c0-1.100-.900-2-2-2h-2V3h-2v2h-2V3H9v2H7c-1.100 0-2 .900-2 2v2H3v2h2v2H3v2h2v2c0 1.100.900 2 2 2h2v2h2v-2h2v2h2v-2h2c1.100 0 2-.900 2-2v-2h2v-2h-2v-2h2zm-4 6H7V7h10v10z"/></svg><div class="mt">107.47 MB</div><svg class="se" viewBox="0 0 30 30"><g transform="translate(0,-1.700) scale(1.250,1.400)"><path d="M13.91 2.505c-.873-1.448-2.972-1.448-3.844 0L6.904 7.920a15.478 15.478 0 0 1 8.530 12.811h-2.221A13.301 13.301 0 0 0 5.784 9.814l-2.926 5.060a7.650 7.650 0 0 1 4.435 5.848H2.194a.365.365 0 0 1-.298-.534l1.413-2.402a5.160 5.160 0 0 0-1.614-.913L.296 19.275a2.182 2.182 0 0 0 .812 2.999 2.240 2.240 0 0 0 1.086.288h6.983a9.322 9.322 0 0 0-3.845-8.318l1.110-1.922a11.470 11.470 0 0 1 4.950 10.240h5.915a17.242 17.242 0 0 0-7.885-15.280l2.244-3.845a.370.370 0 0 1 .504-.130c.255.140 9.750 16.708 9.928 16.900a.365.365 0 0 1-.327.543h-2.287c.029.612.029 1.223 0 1.831h2.297a2.206 2.206 0 0 0 1.922-3.310z" fill="#808080" stroke="#808080" stroke-width=".8" stroke-linejoin="round"/></g><path d="M1.800 1.800l26.500 26.500M28.200 1.800l-26.500 26.500" stroke="#808080" stroke-width="3.500" fill="none"/></svg></div>
<div class="row alt"><div class="cb"><i></i></div><svg class="ai" viewBox="0 0 40 40"><path d="M3.360 34.100A19 19 0 1 1 37.040 34.100z" fill="#fff" stroke="#2b8fd1" stroke-width="2.100" stroke-linejoin="round"/>
<path d="M6 29.200A14.750 14.750 0 1 1 34.400 29.200" fill="none" stroke="#2b8fd1" stroke-width="1.400" stroke-dasharray=".8 .8"/>
<path d="M10.800 17.600l12 9.300a2.300 2.300 0 1 1-3.300 3.100z" fill="#fff" stroke="#2b8fd1" stroke-width="1.300" stroke-linejoin="round"/></svg><div class="nm">vis-2.0</div><svg class="ri pa" style="" viewBox="0 0 24 24" ><path d="M6 19h4V5H6v14zm8-14v14h4V5h-4z"/></svg><svg class="ri wr" style="" viewBox="0 0 24 24" ><path d="M22.7 19l-9.1-9.1c.9-2.3.4-5-1.5-6.900-2-2-5-2.400-7.400-1.300L9 6 6 9 1.600 4.700C.4 7.100.9 10.100 2.900 12.100c1.900 1.900 4.600 2.400 6.900 1.500l9.100 9.100c.4.400 1 .400 1.400 0l2.300-2.300c.5-.4.5-1.100.1-1.400z"/></svg><svg class="ri rf" style="" viewBox="0 0 24 24" ><path d="M17.650 6.350C16.200 4.900 14.210 4 12 4c-4.420 0-7.990 3.580-7.990 8s3.570 8 7.990 8c3.730 0 6.840-2.550 7.730-6h-2.080c-.820 2.330-3.040 4-5.650 4-3.310 0-6-2.690-6-6s2.690-6 6-6c1.660 0 3.140.690 4.220 1.780L13 11h7V4l-2.350 2.350z"/></svg><svg class="ri in" style="" viewBox="0 0 24 24" ><path d="M21 3.010H3c-1.100 0-2 .900-2 2V9h2V4.990h18v14.030H3V15H1v4.010c0 1.100.900 1.980 2 1.980h18c1.100 0 2-.880 2-1.980v-14c0-1.110-.900-2-2-2zM11 16l4-4-4-4v3H1v2h10v3z"/></svg><div class="tt">Visualisierung Next Gener…</div><svg class="mi" style="" viewBox="0 0 24 24" ><path d="M15 9H9v6h6V9zm-2 4h-2v-2h2v2zm8-2V9h-2V7c0-1.100-.900-2-2-2h-2V3h-2v2h-2V3H9v2H7c-1.100 0-2 .900-2 2v2H3v2h2v2H3v2h2v2c0 1.100.900 2 2 2h2v2h2v-2h2v2h2v-2h2c1.100 0 2-.900 2-2v-2h2v-2h-2v-2h2zm-4 6H7V7h10v10z"/></svg><div class="mt">95.48 MB</div><svg class="se" viewBox="0 0 30 30"><g transform="translate(0,-1.700) scale(1.250,1.400)"><path d="M13.91 2.505c-.873-1.448-2.972-1.448-3.844 0L6.904 7.920a15.478 15.478 0 0 1 8.530 12.811h-2.221A13.301 13.301 0 0 0 5.784 9.814l-2.926 5.060a7.650 7.650 0 0 1 4.435 5.848H2.194a.365.365 0 0 1-.298-.534l1.413-2.402a5.160 5.160 0 0 0-1.614-.913L.296 19.275a2.182 2.182 0 0 0 .812 2.999 2.240 2.240 0 0 0 1.086.288h6.983a9.322 9.322 0 0 0-3.845-8.318l1.110-1.922a11.470 11.470 0 0 1 4.950 10.240h5.915a17.242 17.242 0 0 0-7.885-15.280l2.244-3.845a.370.370 0 0 1 .504-.130c.255.140 9.750 16.708 9.928 16.900a.365.365 0 0 1-.327.543h-2.287c.029.612.029 1.223 0 1.831h2.297a2.206 2.206 0 0 0 1.922-3.310z" fill="#808080" stroke="#808080" stroke-width=".8" stroke-linejoin="round"/></g><path d="M1.800 1.800l26.500 26.500M28.200 1.800l-26.500 26.500" stroke="#808080" stroke-width="3.500" fill="none"/></svg></div>
<div class="row last"><div class="cb"><i></i></div><svg class="ai" viewBox="0 0 40 40"><circle cx="16.400" cy="17.300" r="15.400" fill="#a6c9f7" stroke="#5b9ff2" stroke-width="1"/>
<g fill="none" stroke="#5b9ff2" stroke-width="1.100"><ellipse cx="16.400" cy="17.300" rx="7.800" ry="15.400"/><path d="M16.400 1.900v30.800M1 17.300h30.800M3.500 9.300h25.800M3.500 25.300h25.800"/></g>
<path d="M0 9.500c3.500-4.500 10-4 13.500 2.500l1.800-1.400-.3 6.400-6-1.800 1.900-1.200c-2.600-3.900-6.900-5.500-10.900-4.500z" fill="#fff" stroke="#5b9ff2" stroke-width=".5"/>
<rect x="22.300" y="10.700" width="16.600" height="29.300" rx="1.500" fill="#eef5ff" stroke="#5b9ff2" stroke-width="1.300"/>
<path d="M25.200 15.200h10.800M25.200 17.800h10.800M25.200 23h10.800M25.200 30.200h10.800" stroke="#5b9ff2" stroke-width="1.100" fill="none"/>
<circle cx="26.700" cy="35.100" r="2" fill="#7db2f5"/><circle cx="34.800" cy="35.100" r="2" fill="#7db2f5"/></svg><div class="nm">web.0</div><svg class="ri pa" style="" viewBox="0 0 24 24" ><path d="M6 19h4V5H6v14zm8-14v14h4V5h-4z"/></svg><svg class="ri wr" style="" viewBox="0 0 24 24" ><path d="M22.7 19l-9.1-9.1c.9-2.3.4-5-1.5-6.900-2-2-5-2.400-7.400-1.300L9 6 6 9 1.600 4.700C.4 7.100.9 10.100 2.900 12.100c1.900 1.900 4.600 2.400 6.900 1.500l9.100 9.100c.4.400 1 .400 1.400 0l2.300-2.300c.5-.4.5-1.100.1-1.400z"/></svg><svg class="ri rf" style="" viewBox="0 0 24 24" ><path d="M17.650 6.350C16.200 4.900 14.210 4 12 4c-4.420 0-7.990 3.580-7.990 8s3.570 8 7.990 8c3.730 0 6.840-2.550 7.730-6h-2.080c-.820 2.330-3.040 4-5.650 4-3.310 0-6-2.690-6-6s2.690-6 6-6c1.660 0 3.140.690 4.220 1.780L13 11h7V4l-2.350 2.350z"/></svg><svg class="ri in" style="" viewBox="0 0 24 24" ><path d="M21 3.010H3c-1.100 0-2 .900-2 2V9h2V4.990h18v14.030H3V15H1v4.010c0 1.100.900 1.980 2 1.980h18c1.100 0 2-.880 2-1.980v-14c0-1.110-.900-2-2-2zM11 16l4-4-4-4v3H1v2h10v3z"/></svg><div class="tt">WEB-Server</div><svg class="mi" style="" viewBox="0 0 24 24" ><path d="M15 9H9v6h6V9zm-2 4h-2v-2h2v2zm8-2V9h-2V7c0-1.100-.900-2-2-2h-2V3h-2v2h-2V3H9v2H7c-1.100 0-2 .900-2 2v2H3v2h2v2H3v2h2v2c0 1.100.900 2 2 2h2v2h2v-2h2v2h2v-2h2c1.100 0 2-.900 2-2v-2h2v-2h-2v-2h2zm-4 6H7V7h10v10z"/></svg><div class="mt">123.13 MB</div><svg class="se" viewBox="0 0 30 30"><g transform="translate(0,-1.700) scale(1.250,1.400)"><path d="M13.91 2.505c-.873-1.448-2.972-1.448-3.844 0L6.904 7.920a15.478 15.478 0 0 1 8.530 12.811h-2.221A13.301 13.301 0 0 0 5.784 9.814l-2.926 5.060a7.650 7.650 0 0 1 4.435 5.848H2.194a.365.365 0 0 1-.298-.534l1.413-2.402a5.160 5.160 0 0 0-1.614-.913L.296 19.275a2.182 2.182 0 0 0 .812 2.999 2.240 2.240 0 0 0 1.086.288h6.983a9.322 9.322 0 0 0-3.845-8.318l1.110-1.922a11.470 11.470 0 0 1 4.950 10.240h5.915a17.242 17.242 0 0 0-7.885-15.280l2.244-3.845a.370.370 0 0 1 .504-.130c.255.140 9.750 16.708 9.928 16.900a.365.365 0 0 1-.327.543h-2.287c.029.612.029 1.223 0 1.831h2.297a2.206 2.206 0 0 0 1.922-3.310z" fill="#808080" stroke="#808080" stroke-width=".8" stroke-linejoin="round"/></g><path d="M1.800 1.800l26.500 26.500M28.200 1.800l-26.500 26.500" stroke="#808080" stroke-width="3.500" fill="none"/></svg></div>
</div>
</div>
</body>
</html>
